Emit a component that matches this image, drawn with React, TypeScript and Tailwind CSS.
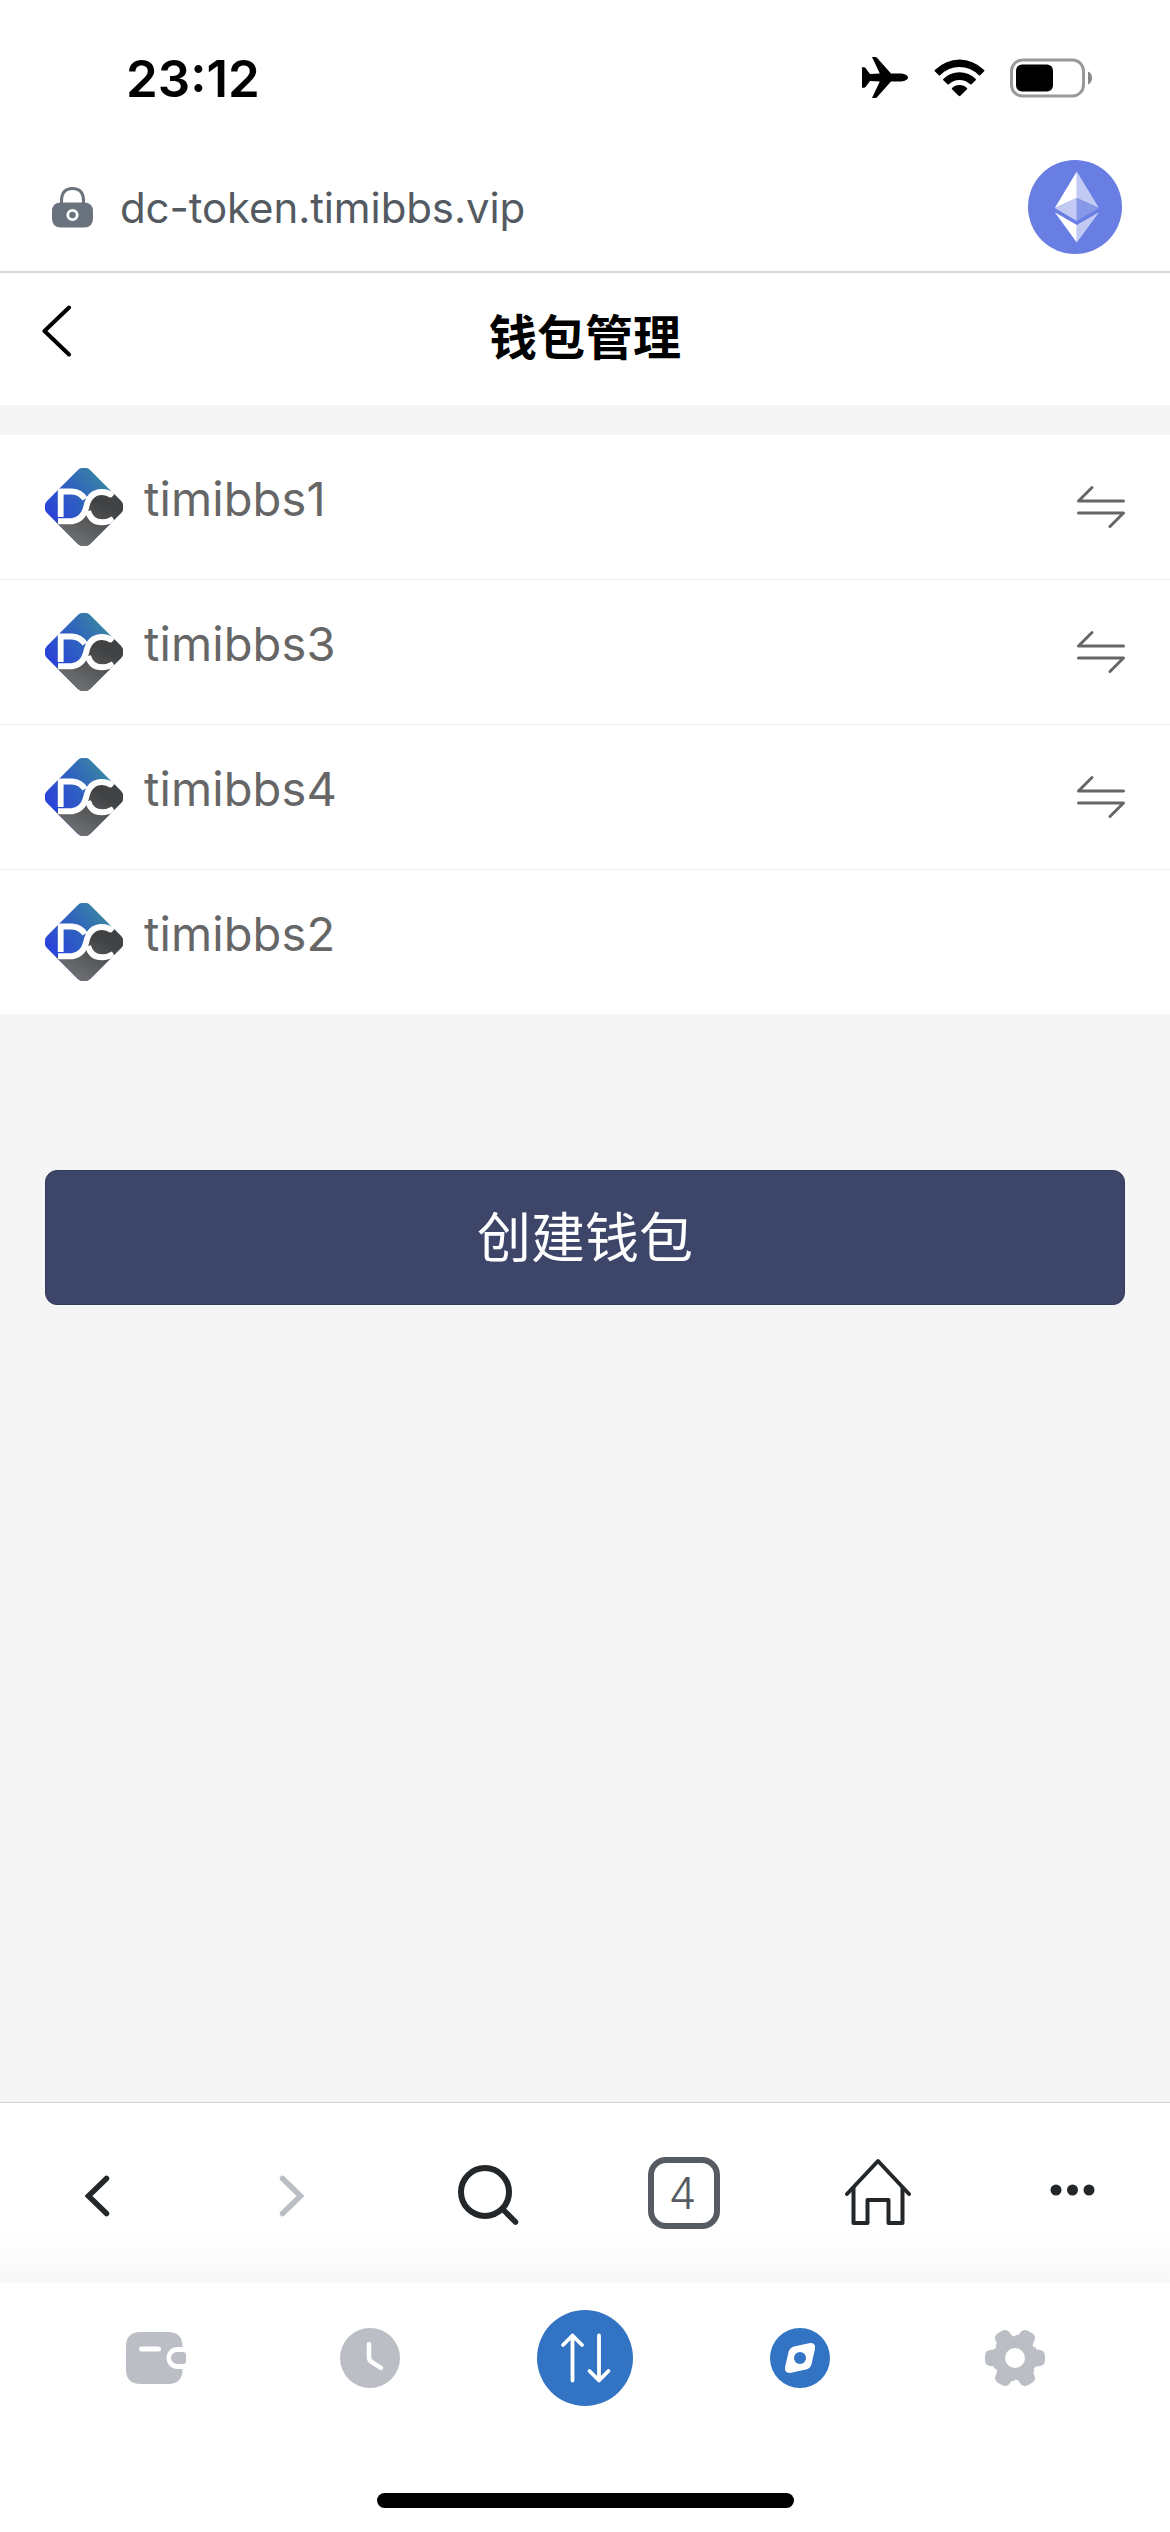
import React from "react";

const wallets = [
  { name: "timibbs1", swap: true },
  { name: "timibbs3", swap: true },
  { name: "timibbs4", swap: true },
  { name: "timibbs2", swap: false },
];

function StatusBar() {
  return (
    <div className="flex h-[156px] items-center justify-between pl-[126px] pr-[78px]">
      <span className="text-[51px] leading-none font-semibold text-black">23:12</span>
      <div className="flex items-center">
        <svg width="46" height="42" viewBox="0 0 46 42" className="mr-[26px]">
          <path
            d="M10 0h3.400q1 0 1.800 1L29 16.500h10q7 .8 7 4t-7 4H29L15.200 40q-.8 1-1.800 1H10L17.800 24.600 8 24 3.500 30q-.6.8-1.500.8H0V10.200h2q.9 0 1.500.8L8 17l9.800-.6Z"
            fill="#000"
          />
        </svg>
        <svg width="51" height="38" viewBox="0 0 51 38" className="mr-[25px]">
          <path d="M.8 11Q12 .5 25.500.5T50.200 11q.5.600 0 1.200l-4 4q-.7.600-1.300 0Q36.500 8 25.500 8T6.100 16.200q-.6.600-1.300 0l-4-4q-.5-.600 0-1.200Z" />
          <path d="M9.300 20Q16 13.300 25.500 13.300T41.700 20q.6.600 0 1.300l-4.200 4q-.6.500-1.200 0-4.800-4.400-10.800-4.400t-10.800 4.400q-.6.500-1.200 0l-4.200-4q-.6-.7 0-1.300Z" />
          <path d="M18 29q3-3 7.500-3t7.500 3q.5.600 0 1.200l-6.600 6.600q-.9.900-1.800 0L18 30.200q-.5-.600 0-1.200Z" />
        </svg>
        <svg width="82" height="40" viewBox="0 0 82 40">
          <rect x="1.500" y="2" width="72" height="36" rx="11" fill="none" stroke="#999" strokeWidth="3" />
          <rect x="6" y="6.500" width="37" height="27" rx="6" />
          <path d="M78 13.500q4 1.800 4 6.500t-4 6.500Z" fill="#888" />
        </svg>
      </div>
    </div>
  );
}

function AddressBar() {
  return (
    <div className="flex h-[117px] items-center border-b-2 border-[#d6d8dc] pr-[48px] pb-[13px] pl-[52px]">
      <svg width="41" height="41" viewBox="0 0 41 41">
        <path d="M9.500 18v-4Q9.500 1.500 20.500 1.500T31.500 14v4" fill="none" stroke="#6a737d" strokeWidth="3" />
        <path
          d="M9 15.500h23q9 0 9 9v7q0 9-9 9H9q-9 0-9-9v-7q0-9 9-9Z"
          fill="#6a737d"
        />
        <circle cx="20.500" cy="28" r="4.700" fill="#6a737d" stroke="#fff" strokeWidth="2.800" />
      </svg>
      <span className="mt-[2px] ml-[27px] text-[42px] leading-none tracking-[-0.1px] text-[#535a61]">dc-token.timibbs.vip</span>
      <svg width="94" height="94" viewBox="0 0 94 94" className="ml-auto">
        <circle cx="47" cy="47" r="47" fill="#687ee3" />
        <path d="M48.800 11.500 26.800 48l22-10Z" fill="#fff" />
        <path d="M48.800 11.500 71 48 48.800 38Z" fill="#c2caf4" />
        <path d="M48.800 38 26.800 48l22 13Z" fill="#c2caf4" />
        <path d="M48.800 38 71 48 48.800 61Z" fill="#8798e8" />
        <path d="M26.800 52.200 48.800 65v17.500Z" fill="#fff" />
        <path d="M71 52.200 48.800 65v17.500Z" fill="#c2caf4" />
      </svg>
    </div>
  );
}

function WalletLogo({ id }: { id: string }) {
  return (
    <svg width="78" height="78" viewBox="0 0 78 78">
      <defs>
        <linearGradient id={id + "-blue"} x1="0" y1="0.600" x2="0.750" y2="0.100">
          <stop offset="0" stopColor="#2a40dc" />
          <stop offset="0.550" stopColor="#2f63bd" />
          <stop offset="1" stopColor="#3a86a3" />
        </linearGradient>
        <linearGradient id={id + "-gray"} x1="0.350" y1="1" x2="0.850" y2="0.300">
          <stop offset="0" stopColor="#727476" />
          <stop offset="1" stopColor="#414244" />
        </linearGradient>
        <clipPath id={id + "-clip"}>
          <rect x="8.500" y="8.500" width="61" height="61" rx="9" transform="rotate(45 39 39)" />
        </clipPath>
      </defs>
      <g clipPath={`url(#${id}-clip)`}>
        <rect width="78" height="78" fill={`url(#${id}-blue)`} />
        <path
          d="M0 54H27Q38 53 41 41 44 25 57 25L66 27 71 25 78 28V78H0Z"
          fill={`url(#${id}-gray)`}
        />
        <g fill="none" stroke="#fff">
          <path d="M15.700 21V49" strokeWidth="5.800" />
          <path d="M13 23.500H27Q35.500 24 40 31" strokeWidth="5.800" />
          <path d="M13 53.200H27Q38 51.500 41 40 44 24 57 24 62.500 24 67 27.500" strokeWidth="6" />
          <path d="M43 43Q46 54.300 57 54.300 63 54.300 68.500 51" strokeWidth="6" />
        </g>
        <path d="M63 27 66.500 29.500 70 25.500 67 21ZM64 52 67 50 70 54 66 58Z" fill="#fff" />
      </g>
    </svg>
  );
}

function WalletRow({ name, swap }: { name: string; swap: boolean }) {
  return (
    <li className="flex h-[145px] items-start border-b border-[#eee] bg-white pr-[45px] pl-[45px] last:h-[144px] last:border-b-0">
      <div className="pt-[33px]">
        <WalletLogo id={name} />
      </div>
      <span className="ml-[21px] pt-[39px] text-[47px] leading-[49px] tracking-[0.1px] text-[#666]">{name}</span>
      {swap && (
        <svg
          width="48"
          height="44"
          viewBox="0 0 48 44"
          className="mt-[50px] ml-auto"
          fill="none"
          stroke="#666"
          strokeWidth="3"
          strokeLinecap="round"
          strokeLinejoin="round"
        >
          <path d="M46.500 16H1.500L15 2.500M1.500 28h45L33 41.500" />
        </svg>
      )}
    </li>
  );
}

function BrowserToolbar() {
  return (
    <div className="relative h-[181px] border-t border-[#d2d3d5] bg-white">
      <div className="absolute inset-x-0 bottom-0 h-[52px] bg-linear-to-b from-white to-[#f8f8f8]" />
      <div className="relative grid h-full grid-cols-6 items-start justify-items-center">
        <svg width="25" height="42" viewBox="0 0 25 42" className="mt-[72px]" fill="none" stroke="#24272a" strokeWidth="5.500" strokeLinecap="round">
          <path d="M21.500 3.500 3.500 21l18 17.500" />
        </svg>
        <svg width="25" height="42" viewBox="0 0 25 42" className="mt-[72px] mr-[2px]" fill="none" stroke="#bbbec4" strokeWidth="5.500" strokeLinecap="round">
          <path d="M3.500 3.500 21.500 21l-18 17.500" />
        </svg>
        <svg width="62" height="62" viewBox="0 0 62 62" className="mt-[61px]" fill="none" stroke="#24272a" strokeWidth="6" strokeLinecap="round">
          <circle cx="28" cy="28" r="24" />
          <path d="M46.500 46 58.500 58" strokeWidth="5.500" />
        </svg>
        <div className="mt-[54px] ml-[2px] flex h-[72px] w-[72px] items-center justify-center rounded-[18px] border-[6px] border-[#555b61] pr-[2px] text-[44px] leading-none font-light text-[#555b61]">
          4
        </div>
        <svg width="66" height="68" viewBox="0 0 66 68" className="mt-[55px]" fill="none" stroke="#24272a" strokeWidth="4" strokeLinecap="round" strokeLinejoin="round">
          <path d="M2 36 33 3 64 36" />
          <path d="M8.500 30v35h14V42h21v23h14V30" />
        </svg>
        <svg width="45" height="12" viewBox="0 0 45 12" className="mt-[81px]" fill="#24272a">
          <circle cx="6" cy="6" r="5.500" />
          <circle cx="22.500" cy="6" r="5.500" />
          <circle cx="39" cy="6" r="5.500" />
        </svg>
      </div>
    </div>
  );
}

const gearTeeth = [0, 60, 120, 180, 240, 300];

function TabBar() {
  return (
    <nav className="flex h-[249px] flex-col items-center bg-white">
      <div className="grid h-[150px] w-[1073px] grid-cols-5 items-center justify-items-center">
        <svg width="60" height="52" viewBox="0 0 60 52">
          <path
            d="M14.500 0H42Q56.500 0 56.500 14.500V15H51.500A11 11 0 0 0 51.500 37H56.500V37.500Q56.500 52 42 52H14.500Q0 52 0 37.500V14.500Q0 0 14.500 0Z"
            fill="#bbbec4"
          />
          <path d="M51 20h6q3 0 3 3v6q0 3-3 3h-6a6 6 0 0 1 0-12Z" fill="#bbbec4" />
          <path d="M15.500 17H32.500" stroke="#fff" strokeWidth="5" strokeLinecap="round" />
        </svg>
        <svg width="60" height="60" viewBox="0 0 60 60">
          <circle cx="30" cy="30" r="30" fill="#bbbec4" />
          <path d="M29 16.300V29q0 3.500 3 5.300l9 5.600" fill="none" stroke="#fff" strokeWidth="4.600" strokeLinecap="round" />
        </svg>
        <svg width="96" height="96" viewBox="0 0 96 96">
          <circle cx="48" cy="48" r="48" fill="#3274c3" />
          <g fill="none" stroke="#fff" strokeWidth="3.800" strokeLinecap="round" strokeLinejoin="round">
            <path d="M35.500 70.500V25.500M26 35 35.500 25.500 45 35" />
            <path d="M62 25.500V70.500M52.500 61 62 70.500 71.500 61" />
          </g>
        </svg>
        <svg width="60" height="60" viewBox="0 0 60 60">
          <circle cx="30" cy="30" r="30" fill="#3274c3" />
          <path
            d="M38.800 15.200Q45.800 14 45 20.800L41.300 37Q40.300 40 37 41.200L21.200 44.800Q14.500 45.800 15 39.200L18.800 23Q20 20 23 18.800Z"
            fill="#fff"
          />
          <circle cx="30" cy="30" r="6" fill="#3274c3" />
        </svg>
        <svg width="60" height="60" viewBox="0 0 60 60" className="ml-[2px]">
          <g fill="#bbbec4">
            {gearTeeth.map((angle) => (
              <path
                key={angle}
                d="M30 30 18 9.200 17.800 9.800Q13.500 14 10.500 17.500 13 21.500 6.500 21.700 0 22 0 28V32Q0 38 6.500 38.300 13 38.500 11.700 43L30 30Z"
                transform={`rotate(${angle} 30 30)`}
              />
            ))}
          </g>
          <circle cx="30" cy="30" r="10" fill="#fff" />
        </svg>
      </div>
      <div className="mt-[60px] h-[15px] w-[417px] rounded-full bg-black" />
    </nav>
  );
}

export default function App() {
  return (
    <div className="flex h-[2532px] w-[1170px] flex-col bg-white font-['Inter','Noto_Sans_CJK_SC',sans-serif]">
      <StatusBar />
      <AddressBar />
      <header className="grid h-[132px] grid-cols-[1fr_auto_1fr] items-center px-[42px]">
        <svg width="30" height="52" viewBox="0 0 30 52" className="-mt-[16px]" fill="none" stroke="#000" strokeWidth="4" strokeLinecap="round" strokeLinejoin="round">
          <path d="M27 2.500 2.500 26 27 49.500" />
        </svg>
        <h1 className="-mt-[3px] text-[48px] leading-none font-bold text-black">钱包管理</h1>
      </header>
      <main className="flex-1 bg-[#f5f5f5] pt-[30px]">
        <ul>
          {wallets.map((w) => (
            <WalletRow key={w.name} name={w.name} swap={w.swap} />
          ))}
        </ul>
        <div className="px-[45px] pt-[156px]">
          <button className="flex h-[135px] w-full items-center justify-center rounded-[12px] border border-[#323d5e] bg-[#3d4669] pt-[2px] text-[54px] leading-none text-white">
            创建钱包
          </button>
        </div>
      </main>
      <BrowserToolbar />
      <TabBar />
    </div>
  );
}
